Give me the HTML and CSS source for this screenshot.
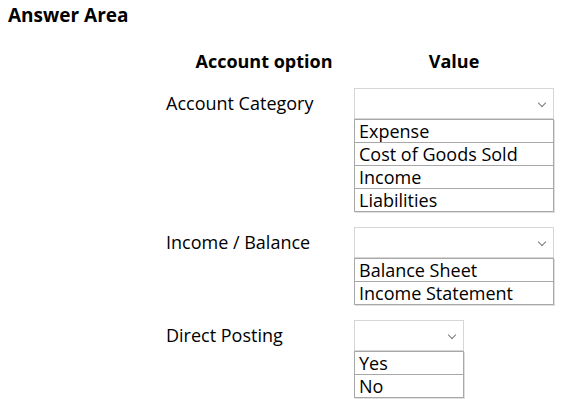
FILE: index.html
```html
<!DOCTYPE html>
<html lang="en">
<head>
    <meta charset="UTF-8">
    <meta name="viewport" content="width=device-width, initial-scale=1.0">
    <title>Answer Area</title>
    <link rel="stylesheet" href="styles.css">
</head>
<body>
    <h1 class="title">Answer Area</h1>
    <div class="answer-table">
        <div class="head">Account option</div>
        <div class="head">Value</div>

        <div class="label">Account Category</div>
        <div class="field">
            <div class="select"><span class="chevron"></span></div>
            <ul class="options">
                <li>Expense</li>
                <li>Cost of Goods Sold</li>
                <li>Income</li>
                <li>Liabilities</li>
            </ul>
        </div>

        <div class="label">Income / Balance</div>
        <div class="field">
            <div class="select"><span class="chevron"></span></div>
            <ul class="options">
                <li>Balance Sheet</li>
                <li>Income Statement</li>
            </ul>
        </div>

        <div class="label">Direct Posting</div>
        <div class="field small">
            <div class="select"><span class="chevron"></span></div>
            <ul class="options">
                <li>Yes</li>
                <li>No</li>
            </ul>
        </div>
    </div>
</body>
</html>
```

FILE: styles.css
```css
* {
    margin: 0;
    padding: 0;
    box-sizing: border-box;
}

body {
    font-family: 'Open Sans', 'Noto Sans', sans-serif;
    color: #000;
    background: #fff;
    padding: 3px 8px;
}

.title {
    font-size: 19px;
    font-weight: bold;
    line-height: 24px;
}

.answer-table {
    display: grid;
    grid-template-columns: 188px 200px;
    margin: 22px 0 0 158px;
    row-gap: 15px;
}

.head {
    font-size: 18px;
    font-weight: bold;
    text-align: center;
    line-height: 24px;
    padding-left: 8px;
}

.head:nth-child(2) {
    padding-left: 0;
}

.label {
    font-size: 18px;
    line-height: 31px;
}

.field {
    width: 200px;
}

.field.small {
    width: 110px;
}

.select {
    height: 31px;
    border: 1px solid #d6d6d6;
    position: relative;
}

.chevron {
    position: absolute;
    right: 8px;
    top: 11px;
    width: 6px;
    height: 6px;
    border-right: 1.5px solid #7a7a7a;
    border-bottom: 1.5px solid #7a7a7a;
    transform: rotate(45deg);
}

.options {
    list-style: none;
    border: 1px solid #a8a8a8;
    border-top: 0;
    box-shadow: 1px 1px 0 #e0e0e0;
}

.options li {
    font-size: 18px;
    line-height: 22px;
    padding-left: 4px;
    border-top: 1px solid #a8a8a8;
}
```
